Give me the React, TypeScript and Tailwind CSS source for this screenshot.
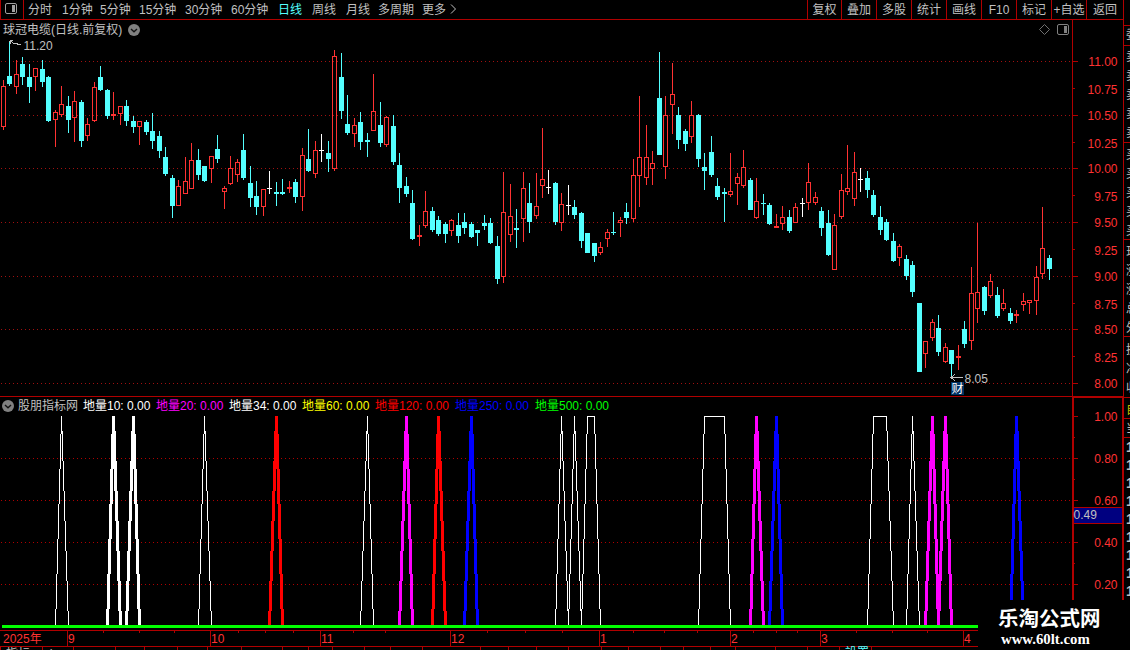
import React from "react";

type Kind = "r" | "c" | "w";
type Candle = [number, number, number, number, number, Kind];

// x of the wick, high, low, body top, body bottom, kind
const candles: Candle[] = [
  [3, 80, 130, 86, 127, "r"], [9, 41, 86, 76, 84, "c"], [16, 60, 94, 74, 87, "r"], [22, 57, 85, 64, 77, "c"],
  [29, 64, 103, 77, 87, "c"], [35, 68, 91, 68, 77, "r"], [42, 60, 87, 69, 82, "c"], [48, 76, 122, 77, 121, "c"],
  [55, 110, 147, 112, 120, "r"], [61, 86, 117, 104, 115, "r"], [68, 96, 133, 106, 120, "c"], [74, 91, 142, 101, 118, "r"],
  [81, 100, 147, 102, 141, "c"], [87, 118, 141, 124, 136, "r"], [94, 82, 122, 87, 121, "r"], [100, 66, 91, 77, 90, "c"],
  [107, 89, 119, 90, 116, "c"], [113, 92, 120, 114, 116, "r"], [120, 106, 125, 106, 114, "r"], [126, 100, 126, 106, 121, "c"],
  [133, 116, 133, 121, 127, "c"], [139, 121, 145, 121, 127, "r"], [146, 120, 135, 122, 132, "c"], [152, 113, 149, 131, 141, "c"],
  [159, 131, 158, 136, 151, "c"], [165, 147, 176, 157, 174, "c"], [172, 175, 218, 178, 206, "c"], [178, 180, 206, 186, 206, "r"],
  [185, 157, 194, 181, 194, "r"], [191, 143, 189, 160, 189, "r"], [198, 149, 180, 160, 175, "c"], [204, 166, 182, 166, 181, "c"],
  [211, 156, 183, 156, 169, "r"], [217, 135, 163, 149, 159, "c"], [224, 186, 209, 188, 192, "r"], [230, 156, 185, 168, 184, "r"],
  [237, 159, 182, 162, 175, "r"], [243, 134, 180, 150, 178, "c"], [250, 166, 207, 183, 198, "c"], [256, 181, 215, 196, 207, "c"],
  [263, 189, 216, 189, 207, "r"], [269, 171, 194, 188, 189, "w"], [276, 182, 206, 192, 194, "c"], [282, 179, 195, 192, 194, "c"],
  [289, 181, 193, 187, 189, "r"], [295, 179, 203, 182, 197, "c"], [302, 148, 211, 155, 197, "r"], [308, 129, 172, 159, 171, "c"],
  [315, 141, 178, 150, 174, "r"], [321, 134, 162, 150, 151, "w"], [328, 141, 172, 153, 159, "c"], [334, 50, 171, 56, 169, "r"],
  [341, 53, 119, 77, 111, "c"], [347, 95, 135, 124, 133, "c"], [354, 118, 147, 125, 134, "r"], [360, 112, 150, 122, 142, "c"],
  [367, 133, 157, 140, 142, "c"], [373, 74, 131, 111, 131, "r"], [380, 102, 147, 125, 143, "c"], [386, 116, 147, 117, 145, "r"],
  [393, 115, 165, 126, 162, "c"], [399, 153, 203, 165, 188, "c"], [406, 177, 197, 186, 194, "c"], [412, 190, 240, 203, 239, "c"],
  [419, 225, 246, 235, 237, "r"], [425, 191, 228, 211, 226, "r"], [432, 207, 232, 211, 230, "c"], [438, 216, 236, 220, 234, "c"],
  [445, 222, 243, 224, 234, "c"], [451, 219, 236, 220, 231, "r"], [458, 213, 243, 225, 236, "c"], [464, 213, 234, 222, 228, "c"],
  [471, 222, 238, 224, 237, "c"], [477, 230, 246, 230, 233, "c"], [484, 215, 230, 223, 226, "c"], [490, 218, 244, 223, 243, "c"],
  [497, 236, 284, 246, 279, "c"], [503, 172, 283, 212, 277, "r"], [510, 184, 242, 216, 235, "r"], [516, 209, 248, 228, 230, "c"],
  [523, 172, 242, 188, 219, "r"], [529, 183, 233, 203, 222, "c"], [536, 173, 219, 206, 216, "r"], [542, 128, 198, 179, 186, "r"],
  [548, 170, 194, 187, 188, "w"], [555, 182, 225, 183, 222, "c"], [561, 193, 231, 204, 223, "r"], [568, 185, 215, 205, 206, "w"],
  [574, 200, 219, 207, 215, "c"], [581, 212, 248, 213, 241, "c"], [587, 233, 253, 233, 253, "c"], [594, 243, 262, 243, 256, "c"],
  [600, 242, 255, 247, 253, "r"], [607, 229, 247, 232, 239, "r"], [613, 212, 235, 232, 233, "c"], [620, 217, 237, 220, 223, "r"],
  [626, 203, 224, 212, 218, "c"], [633, 159, 222, 175, 219, "r"], [639, 96, 207, 157, 176, "r"], [646, 125, 185, 157, 178, "r"],
  [652, 151, 185, 163, 169, "r"], [659, 52, 155, 98, 155, "c"], [665, 96, 179, 115, 167, "r"], [672, 63, 134, 94, 105, "r"],
  [678, 107, 149, 115, 140, "c"], [685, 129, 151, 131, 144, "c"], [691, 101, 143, 115, 137, "r"], [698, 114, 167, 115, 159, "c"],
  [704, 153, 190, 167, 171, "c"], [711, 136, 177, 152, 175, "c"], [717, 178, 200, 186, 197, "c"], [724, 188, 222, 192, 194, "c"],
  [730, 153, 197, 191, 195, "r"], [737, 173, 205, 177, 184, "r"], [743, 150, 188, 167, 186, "r"], [750, 178, 210, 180, 210, "c"],
  [756, 178, 219, 201, 218, "r"], [763, 194, 215, 203, 204, "c"], [769, 203, 225, 205, 224, "c"], [776, 214, 228, 226, 228, "r"],
  [782, 206, 230, 217, 224, "r"], [789, 210, 233, 217, 231, "c"], [795, 203, 223, 207, 223, "r"], [802, 198, 217, 203, 204, "w"],
  [808, 163, 210, 182, 203, "r"], [815, 192, 205, 197, 203, "r"], [821, 207, 236, 211, 228, "c"], [828, 210, 256, 223, 255, "c"],
  [834, 214, 270, 225, 270, "r"], [841, 174, 219, 190, 217, "r"], [847, 145, 195, 188, 192, "r"], [854, 152, 206, 172, 199, "r"],
  [860, 168, 192, 179, 180, "w"], [867, 171, 198, 178, 190, "c"], [873, 190, 217, 195, 215, "c"], [880, 206, 235, 217, 230, "c"],
  [886, 219, 241, 222, 240, "c"], [893, 233, 262, 241, 261, "c"], [899, 244, 266, 246, 258, "r"], [906, 255, 280, 259, 276, "c"],
  [912, 261, 297, 265, 292, "c"], [919, 303, 372, 303, 372, "c"], [925, 341, 368, 341, 354, "r"], [932, 319, 341, 322, 338, "r"],
  [938, 315, 356, 328, 352, "c"], [945, 343, 363, 347, 362, "r"], [951, 350, 379, 350, 364, "c"], [958, 345, 370, 356, 358, "r"],
  [964, 321, 348, 329, 344, "c"], [971, 267, 350, 293, 341, "r"], [977, 223, 323, 292, 309, "r"], [984, 286, 315, 287, 311, "c"],
  [990, 274, 298, 281, 296, "r"], [997, 287, 318, 295, 316, "c"], [1003, 289, 311, 303, 309, "r"], [1010, 308, 324, 313, 321, "c"],
  [1016, 310, 323, 314, 316, "r"], [1023, 293, 311, 301, 305, "r"], [1029, 300, 314, 300, 303, "r"], [1036, 266, 315, 277, 301, "r"],
  [1042, 207, 279, 248, 274, "r"], [1049, 255, 280, 258, 269, "c"],
];

const colors: Record<Kind, string> = { r: "#ff3232", c: "#54ffff", w: "#ffffff" };

function CandleShape({ c }: { c: Candle }) {
  const [x, hi, lo, top, bottom, kind] = c;
  const fill = colors[kind];
  const h = bottom - top;
  if (kind === "r" && h > 2) {
    return (
      <g>
        <rect x={x} y={hi} width={1} height={top - hi} fill={fill} />
        <rect x={x} y={bottom} width={1} height={lo - bottom} fill={fill} />
        <path fill={fill} fillRule="evenodd" d={`M${x - 2} ${top}h5v${h}h-5zM${x - 1} ${top + 1}v${h - 2}h3v${-(h - 2)}z`} />
      </g>
    );
  }
  return (
    <g fill={fill}>
      <rect x={x} y={hi} width={1} height={lo - hi} />
      <rect x={x - 2} y={top} width={5} height={h} />
    </g>
  );
}

const periods: { t: string; w: string; on?: boolean }[] = [
  { t: "分时", w: "w-[34px]" }, { t: "1分钟", w: "w-[38px]" }, { t: "5分钟", w: "w-[39px]" }, { t: "15分钟", w: "w-[46px]" },
  { t: "30分钟", w: "w-[46px]" }, { t: "60分钟", w: "w-[47px]" }, { t: "日线", w: "w-[34px]", on: true }, { t: "周线", w: "w-[34px]" },
  { t: "月线", w: "w-[32px]" }, { t: "多周期", w: "w-[44px]" }, { t: "更多", w: "w-[28px]" },
];

const tools: [string, string][] = [
  ["复权", "w-[34px]"], ["叠加", "w-[35px]"], ["多股", "w-[35px]"], ["统计", "w-[35px]"], ["画线", "w-[35px]"],
  ["F10", "w-[35px]"], ["标记", "w-[35px]"], ["+自选", "w-[35px]"], ["返回", "w-[37px]"],
];

const priceTicks: [number, string][] = [
  [61, "11.00"], [89, "10.75"], [115, "10.50"], [143, "10.25"], [168, "10.00"], [196, "9.75"], [222, "9.50"],
  [250, "9.25"], [276, "9.00"], [304, "8.75"], [329, "8.50"], [357, "8.25"], [383, "8.00"],
];
const subTicks: [number, string][] = [[416, "1.00"], [458, "0.80"], [500, "0.60"], [542, "0.40"], [584, "0.20"]];

const legend: [string, string, string][] = [
  ["地量10: 0.00", "text-white", "w-[73px]"], ["地量20: 0.00", "text-[#ff00ff]", "w-[73px]"], ["地量34: 0.00", "text-white", "w-[73px]"],
  ["地量60: 0.00", "text-[#ffff00]", "w-[73px]"], ["地量120: 0.00", "text-[#ff0000]", "w-[80px]"],
  ["地量250: 0.00", "text-[#0000ff]", "w-[80px]"], ["地量500: 0.00", "text-[#00ff00]", "w-[80px]"],
];

// foot left, top left, top right, foot right, colour, stroke width
const peaks: [number, number, number, number, string, number][] = [
  [55, 61, 61, 68, "#fff", 1], [107, 113, 113, 120, "#fff", 3], [126, 133, 133, 139, "#fff", 3], [198, 204, 204, 211, "#fff", 1],
  [269, 276, 276, 282, "#f00", 3], [360, 367, 367, 373, "#fff", 1], [399, 406, 406, 412, "#f0f", 3], [432, 438, 438, 445, "#f00", 3],
  [464, 471, 471, 477, "#00f", 3], [555, 561, 561, 568, "#fff", 1], [568, 574, 574, 581, "#fff", 1], [581, 587, 594, 600, "#fff", 1],
  [698, 704, 724, 730, "#fff", 1], [750, 756, 756, 763, "#f0f", 3], [769, 776, 776, 782, "#00f", 3], [867, 873, 886, 893, "#fff", 1],
  [906, 912, 912, 919, "#fff", 1], [925, 932, 932, 938, "#f0f", 3], [938, 945, 945, 951, "#f0f", 3], [1010, 1016, 1016, 1023, "#00f", 3],
];

const FLOOR = 626;
const CEIL = 416;

// A line drawn as whole-pixel vertical steps, one per column it crosses.
function steps(x0: number, y0: number, x1: number, y1: number, w: number) {
  const n = Math.abs(x1 - x0);
  const dir = x1 > x0 ? 1 : -1;
  const off = (w - 1) / 2;
  let d = "";
  for (let i = 0; i <= n; i++) {
    const a = y0 + (y1 - y0) * Math.max(0, (i - 0.5) / n);
    const b = y0 + (y1 - y0) * Math.min(1, (i + 0.5) / n);
    const top = Math.round(Math.min(a, b));
    const bottom = Math.round(Math.max(a, b));
    d += `M${x0 + dir * i - off} ${top}h${w}V${bottom}h${-w}z`;
  }
  return d;
}

const months: [number, string][] = [[67, "9"], [210, "10"], [320, "11"], [450, "12"], [599, "1"], [730, "2"], [820, "3"], [963, "4"]];
const weeks = [103, 139, 174, 238, 265, 293, 353, 385, 487, 525, 562, 633, 664, 697, 753, 776, 797, 856, 892, 927];
const lowerTicks = [0, 42, 73, 115, 144, 177, 207, 241, 282, 308, 332, 364, 390, 422, 480, 508, 536, 568, 601, 628, 660, 683, 710, 735, 775, 807, 839, 871];

const sideRows: [string, string][] = [
  ["委", "mt-[26px] mb-[3px]"], ["卖", ""], ["卖", ""], ["卖", ""], ["卖", ""], ["卖", "mb-[3px]"],
  ["买", ""], ["买", ""], ["买", ""], ["买", ""], ["买", "mb-[2px]"],
  ["现", ""], ["涨", ""], ["涨", ""], ["总", ""], ["外", "mb-[3px]"], ["换", ""], ["净", ""], ["收", "mb-[3px]"],
];

function Chevron() {
  return (
    <svg width="12" height="12" viewBox="0 0 12 12">
      <circle cx="6" cy="6" r="6" fill="#808080" />
      <path d="M3 5l3 2.700 3-2.700" fill="none" stroke="#111" strokeWidth="1.4" />
    </svg>
  );
}

function PanelIcon({ color }: { color: string }) {
  return (
    <svg width="12" height="11" viewBox="0 0 12 11">
      <rect x="0.5" y="0.5" width="11" height="10" rx="1.5" fill="none" stroke={color} />
      <rect x="7" y="2" width="3" height="7" fill={color} />
    </svg>
  );
}

function PricePane() {
  return (
    <svg className="block" width="1123" height="376" viewBox="0 20 1123 376" shapeRendering="crispEdges">
      {priceTicks.filter((_, i) => i % 2 === 0).map(([y]) => (
        <line key={y} x1="1" x2="1072" y1={y + 0.5} y2={y + 0.5} stroke="#a01010" strokeDasharray="1 3" />
      ))}
      <rect x="1072" y="20" width="1" height="376" fill="#b00000" />
      {priceTicks.map(([y, t], i) => (
        <g key={t}>
          <rect x="1073" y={i % 2 ? y - 1 : y} width={i % 2 ? 2 : 5} height="1" fill="#b00000" />
          <text x="1117.500" y={y + 5} textAnchor="end" fontSize="12" fill="#ff3232">{t}</text>
        </g>
      ))}
      {candles.map((c) => <CandleShape key={c[0]} c={c} />)}
      <g fill="none" stroke="#c0c0c0">
        <path d="M21 44.500h-2l-3-1h-2l-3-2h-2M9.500 40.500h3M10 41l1 3" />
        <path d="M951 377.500h12M955 374l-4 3.500 4 3.500" />
        <path d="M1044.500 24.500l5 5-5 5-5-5z" stroke="#707070" shapeRendering="auto" />
      </g>
      <g fontSize="12" fill="#c0c0c0">
        <text x="23.500" y="50">11.20</text>
        <text x="964.500" y="383">8.05</text>
      </g>
      <rect x="951" y="382" width="13" height="13" fill="#003264" />
      <text x="951.500" y="393" fontSize="12" fill="#fff">财</text>
    </svg>
  );
}

function IndicatorPane() {
  return (
    <svg className="block" width="1123" height="254" viewBox="0 396 1123 254" shapeRendering="crispEdges">
      <g fill="#b00000">
        <rect x="0" y="396" width="1123" height="1" />
        <rect x="1072" y="396" width="2" height="204" />
        <rect x="1072" y="396" width="51" height="2" />
        <rect x="1122" y="396" width="1" height="204" />
        <rect x="0" y="630" width="978" height="1" />
        <rect x="0" y="646" width="978" height="1" />
        {months.map(([x]) => <rect key={x} x={x} y="630" width="1" height="16" />)}
        {weeks.map((x) => <rect key={x} x={x} y="631" width="1" height="2" />)}
        {lowerTicks.map((x) => <rect key={x} x={x} y="647" width="1" height="3" />)}
        {[437, 479, 521, 563].map((y) => <rect key={y} x="1074" y={y} width="1" height="1" />)}
      </g>
      {subTicks.map(([y, t]) => (
        <g key={t}>
          {y > 416 && <line x1="1" x2="1072" y1={y + 0.5} y2={y + 0.5} stroke="#b00000" strokeDasharray="1 3" />}
          <rect x="1074" y={y} width="4" height="1" fill="#b00000" />
          <text x="1117.500" y={y + 5} textAnchor="end" fontSize="12" fill="#ff3232">{t}</text>
        </g>
      ))}
      <rect x="1074" y="507" width="48" height="17" fill="#b00000" />
      <rect x="1074" y="508" width="48" height="15" fill="#000080" />
      <text x="1073.500" y="519" fontSize="12" fill="#c0c0c0">0.49</text>
      {peaks.map(([a, b, c, d, color, w]) => (
        <g key={a} fill={color}>
          <path d={steps(b, CEIL, a, FLOOR, w)} />
          <path d={steps(c, CEIL, d, FLOOR, w)} />
          {c > b && <rect x={b} y={CEIL} width={c - b} height="1" />}
        </g>
      ))}
      <rect x="2" y="625" width="976" height="3" fill="#00ff00" />
      <g fontSize="12" fill="#ff3232">
        <text x="3" y="643">2025年</text>
        {months.map(([x, t]) => <text key={x} x={x + 1} y="643">{t}</text>)}
      </g>
      <g fontSize="12" fill="#c0c0c0">
        <text x="6" y="658">指标</text>
        <text x="50" y="658">'</text>
        <text x="845" y="657" fill="#54ffff">設置</text>
      </g>
      <rect x="978" y="600" width="145" height="50" fill="#000" />
    </svg>
  );
}

export default function App() {
  return (
    <div className="relative flex h-[650px] w-[1130px] overflow-hidden bg-black font-['Liberation_Sans','Noto_Sans_CJK_SC',sans-serif] text-[12px] leading-[18px] text-[#c0c0c0]">
      <main className="relative flex w-[1123px] shrink-0 flex-col">
        <header className="flex h-[20px] shrink-0 justify-between border-b border-[#b00000]">
          <nav className="flex">
            <div className="mr-[4px] flex w-[24px] items-start border-x border-[#b00000] pt-[3px] pl-[4px]">
              <PanelIcon color="#a0a0a0" />
            </div>
            {periods.map((p) => (
              <span key={p.t} className={`${p.w} shrink-0 pt-px whitespace-nowrap ${p.on ? "text-[#54ffff]" : ""}`}>{p.t}</span>
            ))}
            <svg className="mt-[4px]" width="7" height="10" viewBox="0 0 7 10">
              <path d="M1 .5l4.500 4.500L1 9.500" fill="none" stroke="#c0c0c0" />
            </svg>
          </nav>
          <div className="flex">
            {tools.map(([t, w]) => (
              <span key={t} className={`${w} flex shrink-0 justify-center border-l border-[#b00000] pt-px whitespace-nowrap`}>{t}</span>
            ))}
          </div>
        </header>
        <section className="relative h-[376px]">
          <PricePane />
          <div className="absolute top-0 left-[3px] flex items-center gap-[6px]">
            <span className="pt-px">球冠电缆(日线.前复权)</span>
            <Chevron />
          </div>
          <div className="absolute top-[4px] left-[1057px]">
            <PanelIcon color="#808080" />
          </div>
        </section>
        <section className="relative h-[254px]">
          <IndicatorPane />
          <div className="absolute top-0 left-[2px] flex items-center whitespace-nowrap">
            <Chevron />
            <span className="ml-[4px] w-[65px] pt-px">股朋指标网</span>
            {legend.map(([t, color, w]) => (
              <span key={t} className={`${color} ${w} pt-px`}>{t}</span>
            ))}
          </div>
        </section>
      </main>
      <aside className="relative h-[600px] w-[7px] shrink-0 overflow-hidden border-l border-[#b00000]">
        <div className="flex w-[14px] flex-col pl-[2px]">
          {sideRows.map(([t, gap], i) => (
            <span key={i} className={`h-[19px] shrink-0 ${gap}`}>{t}</span>
          ))}
          <span className="h-[19px] text-[#c0c000]">自</span>
          <span className="h-[18px]">当</span>
          {[0, 1, 2, 3, 4, 5, 6, 7, 8].map((i) => (
            <b key={i} className="h-[18px] text-[14px]">1</b>
          ))}
        </div>
        <svg className="absolute top-0 left-0" width="7" height="600" shapeRendering="crispEdges">
          {[25, 45, 142, 239, 336, 397, 418, 437].map((y) => (
            <rect key={y} x="0" y={y} width="7" height="1" fill="#b00000" />
          ))}
        </svg>
      </aside>
      <div className="absolute top-[600px] left-[978px] flex h-[50px] w-[152px] flex-col items-start bg-black text-white">
        <span className="mt-[6px] ml-[20px] text-[20.5px] leading-[26px] font-bold">乐淘公式网</span>
        <span className="ml-[23px] font-['Liberation_Serif',serif] text-[14.8px] leading-[14px] font-bold">www.60lt.com</span>
      </div>
    </div>
  );
}
